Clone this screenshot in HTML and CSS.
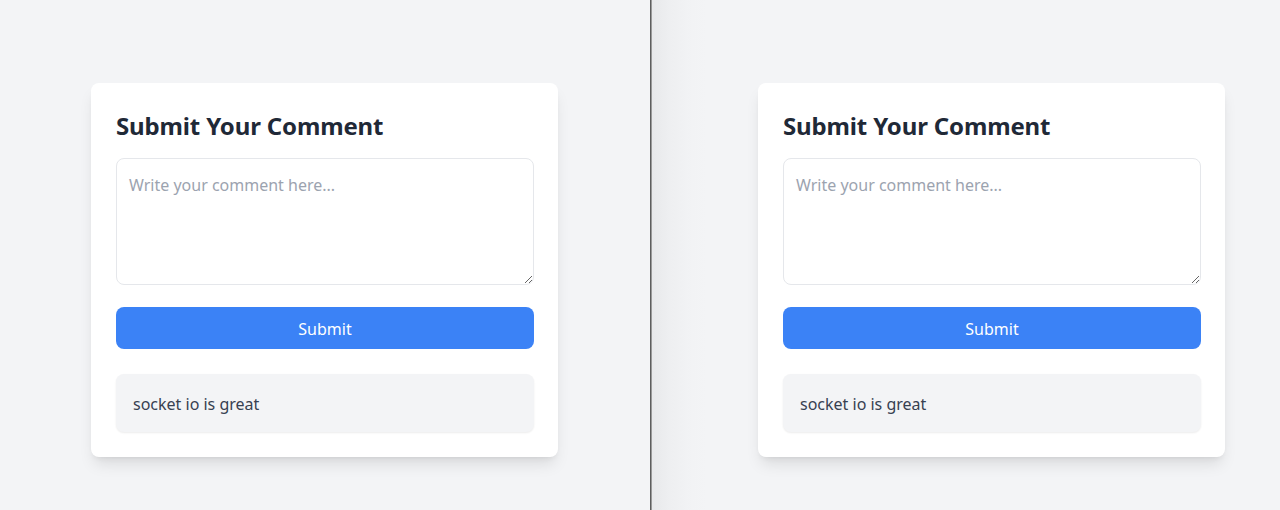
FILE: index.html
```html
<!DOCTYPE html>
<html lang="en">
<head>
<meta charset="utf-8">
<title>Comments</title>
<link rel="stylesheet" href="styles.css">
</head>
<body>
<div class="split">
  <div class="pane pane-left">
    <div class="card">
      <h2 class="title">Submit Your Comment</h2>
      <textarea class="input" placeholder="Write your comment here..."></textarea>
      <button class="btn" type="button">Submit</button>
      <div class="comment">socket io is great</div>
    </div>
  </div>
  <div class="divider"></div>
  <div class="pane pane-right">
    <div class="card">
      <h2 class="title">Submit Your Comment</h2>
      <textarea class="input" placeholder="Write your comment here..."></textarea>
      <button class="btn" type="button">Submit</button>
      <div class="comment">socket io is great</div>
    </div>
  </div>
</div>
</body>
</html>
```

FILE: styles.css
```css
* { box-sizing: border-box; }
html, body {
  margin: 0;
  padding: 0;
  width: 1280px;
  height: 510px;
  overflow: hidden;
  background: #f3f4f6;
  font-family: "Noto Sans", "Open Sans", sans-serif;
}
.split {
  display: flex;
  height: 510px;
  width: 1280px;
}
.pane {
  height: 510px;
  padding-top: 83px;
  background: #f3f4f6;
  overflow: hidden;
}
.pane-left {
  flex: 0 0 650px;
  padding-left: 91px;
}
.divider {
  flex: 0 0 2px;
  background: #5e5e5e;
  border-right: 1px solid #9a9a9a;
}
.pane-right {
  flex: 1 1 auto;
  min-width: 0;
  padding-left: 106px;
  background: linear-gradient(to right, #e8e9eb 0px, #eeeff1 18px, #f2f3f5 40px, #f3f4f6 55px, #f3f4f6 100%);
}
.card {
  width: 467px;
  background: #ffffff;
  border-radius: 8px;
  padding: 24px 24px 25px 25px;
  box-shadow: 0 10px 15px -3px rgba(0,0,0,0.1), 0 4px 6px -4px rgba(0,0,0,0.1);
}
.title {
  margin: 0 0 14px 0;
  font-size: 24px;
  line-height: 37px;
  font-weight: 700;
  letter-spacing: -0.15px;
  color: #1f2937;
}
.input {
  display: block;
  width: 100%;
  height: 127px;
  margin: 0 0 22px 0;
  padding: 14px 12px 12px 12px;
  border: 1px solid #e5e7eb;
  border-radius: 8px;
  font-family: inherit;
  font-size: 16px;
  line-height: 24px;
  color: #1f2937;
  resize: vertical;
  outline: none;
}
.input::placeholder {
  color: #9ca3af;
}
.btn {
  display: block;
  width: 100%;
  height: 42px;
  padding: 2px 0 0 0;
  border: none;
  border-radius: 8px;
  background: #3b82f6;
  color: #ffffff;
  font-family: inherit;
  font-size: 16px;
  cursor: pointer;
}
.comment {
  margin-top: 25px;
  height: 58px;
  display: flex;
  align-items: center;
  padding: 2px 17px 0 17px;
  background: #f3f4f6;
  border-radius: 8px;
  box-shadow: 0 1px 2px rgba(0,0,0,0.08);
  font-size: 16px;
  color: #374151;
}
```
